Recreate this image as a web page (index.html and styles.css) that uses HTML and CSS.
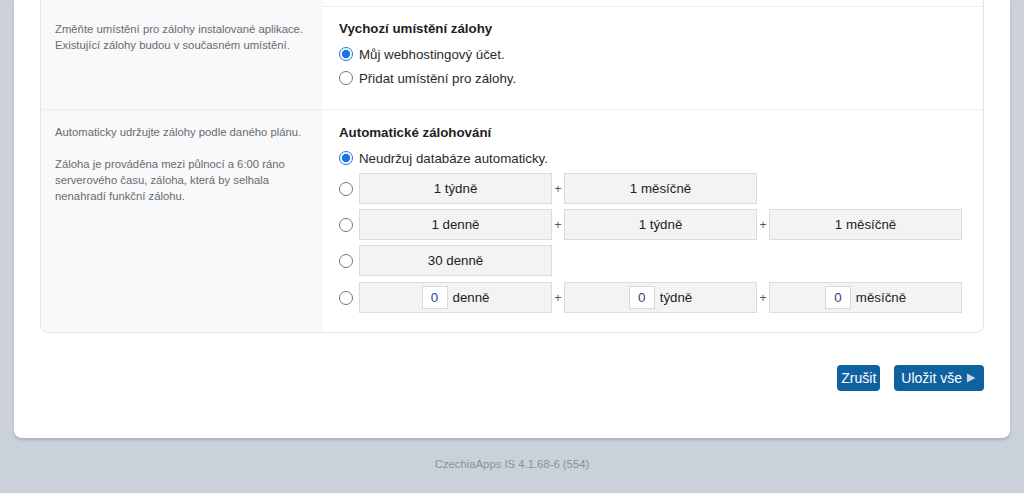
FILE: index.html
```html
<!DOCTYPE html>
<html lang="cs">
<head>
    <meta charset="UTF-8">
    <meta name="viewport" content="width=device-width, initial-scale=1.0">
    <title>Zálohy - CzechiaApps IS</title>
    <link rel="stylesheet" href="styles.css">
</head>
<body>
    <div class="page">
        <div class="panel">
            <div class="card">
                <div class="row row-prev">
                    <div class="row-help"></div>
                    <div class="row-body"></div>
                </div>

                <div class="row">
                    <div class="row-help">
                        <p>Změňte umístění pro zálohy instalované aplikace. Existující zálohy budou v současném umístění.</p>
                    </div>
                    <div class="row-body">
                        <h3 class="row-title">Vychozí umístění zálohy</h3>
                        <div class="options">
                            <label class="option"><input type="radio" name="location" checked> Můj webhostingový účet.</label>
                            <label class="option"><input type="radio" name="location"> Přidat umístění pro zálohy.</label>
                        </div>
                    </div>
                </div>

                <div class="row row-last">
                    <div class="row-help">
                        <p>Automaticky udržujte zálohy podle daného plánu.</p>
                        <p>Záloha je prováděna mezi půlnocí a 6:00 ráno serverového času, záloha, která by selhala nenahradí funkční zálohu.</p>
                    </div>
                    <div class="row-body">
                        <h3 class="row-title">Automatické zálohování</h3>
                        <div class="options">
                            <label class="option"><input type="radio" name="plan" checked> Neudržuj databáze automaticky.</label>

                            <div class="plan">
                                <input type="radio" name="plan">
                                <div class="plan-grid">
                                    <div class="plan-box">1 týdně</div>
                                    <span class="plus">+</span>
                                    <div class="plan-box">1 měsíčně</div>
                                </div>
                            </div>

                            <div class="plan">
                                <input type="radio" name="plan">
                                <div class="plan-grid">
                                    <div class="plan-box">1 denně</div>
                                    <span class="plus">+</span>
                                    <div class="plan-box">1 týdně</div>
                                    <span class="plus">+</span>
                                    <div class="plan-box">1 měsíčně</div>
                                </div>
                            </div>

                            <div class="plan">
                                <input type="radio" name="plan">
                                <div class="plan-grid">
                                    <div class="plan-box">30 denně</div>
                                </div>
                            </div>

                            <div class="plan plan-custom">
                                <input type="radio" name="plan">
                                <div class="plan-grid">
                                    <div class="plan-box"><input class="num-input" type="text" value="0"> denně</div>
                                    <span class="plus">+</span>
                                    <div class="plan-box"><input class="num-input" type="text" value="0"> týdně</div>
                                    <span class="plus">+</span>
                                    <div class="plan-box"><input class="num-input" type="text" value="0"> měsíčně</div>
                                </div>
                            </div>
                        </div>
                    </div>
                </div>
            </div>

            <div class="actions">
                <button class="btn">Zrušit</button>
                <button class="btn btn-save">Uložit vše
                    <svg class="arrow" width="10" height="10" viewBox="0 0 10 10"><path d="M1 0.5 L9.5 5 L1 9.5 Z" fill="#cdd6e0"/></svg>
                </button>
            </div>
        </div>

        <div class="footer">CzechiaApps IS 4.1.68-6 (554)</div>
    </div>
</body>
</html>
```

FILE: styles.css
```css
* { margin: 0; padding: 0; box-sizing: border-box; }
body { font-family: 'Liberation Sans', Arial, sans-serif; background: #cad1db; color: #222; font-size: 13.3px; }
.page { padding: 0 14px; }
.panel { background: #fff; border-radius: 0 0 8px 8px; padding: 0 26px 47px; box-shadow: 0 2px 3px rgba(60, 70, 90, 0.25); }
.card { border: 1px solid #e3e5e9; border-top: none; border-radius: 0 0 8px 8px; overflow: hidden; }
.row { display: grid; grid-template-columns: 282px 1fr; border-top: 1px solid #eceef1; }
.row-prev { border-top: none; height: 6px; }
.row-help { background: #f8f9fb; padding: 14px 14px 20px 14px; color: #6a6a6a; font-size: 11.3px; line-height: 16px; }
.row-help p + p { margin-top: 16px; }
.row-body { padding: 14px 22px 22px 16px; }
.row-last .row-body { padding: 15px 22px 19px 16px; }
.row-title { font-size: 13.3px; font-weight: bold; line-height: 16px; color: #1e1e1e; margin-bottom: 8px; }
.options { display: flex; flex-direction: column; gap: 6px; }
.option { display: flex; align-items: center; gap: 6px; height: 18px; color: #2a2a2a; cursor: pointer; }
input[type="radio"] { margin: 0; width: 14px; height: 14px; accent-color: #1a73e8; flex: none; }
.plan { display: flex; align-items: center; gap: 6px; }
.options .plan:first-of-type { margin-top: 0; }
.plan + .plan { margin-top: -1px; }
.plan-custom { margin-top: 0 !important; }
.plan-grid { display: grid; grid-template-columns: 193px 12px 193px 12px 193px; align-items: center; }
.plan-box { height: 31px; display: flex; align-items: center; justify-content: center; gap: 5px; background: #f3f3f3; border: 1px solid #dcdcdc; color: #222; }
.plus { text-align: center; font-size: 12px; color: #555; }
.num-input { width: 26px; height: 23px; border: 1px solid #d8d8d8; background: #fff; text-align: center; font-family: inherit; font-size: 13.3px; color: #3b3b8c; }
.actions { display: flex; justify-content: flex-end; gap: 14px; margin-top: 32px; }
.btn { height: 26px; padding: 0 4px; background: #0f62a0; color: #fff; border: none; border-radius: 4px; font-family: inherit; font-size: 14px; cursor: pointer; display: flex; align-items: center; }
.btn-save { padding: 0 8px 0 7px; gap: 4px; }
.footer { text-align: center; color: #8a9099; font-size: 11.3px; padding: 20px 0; }
```
